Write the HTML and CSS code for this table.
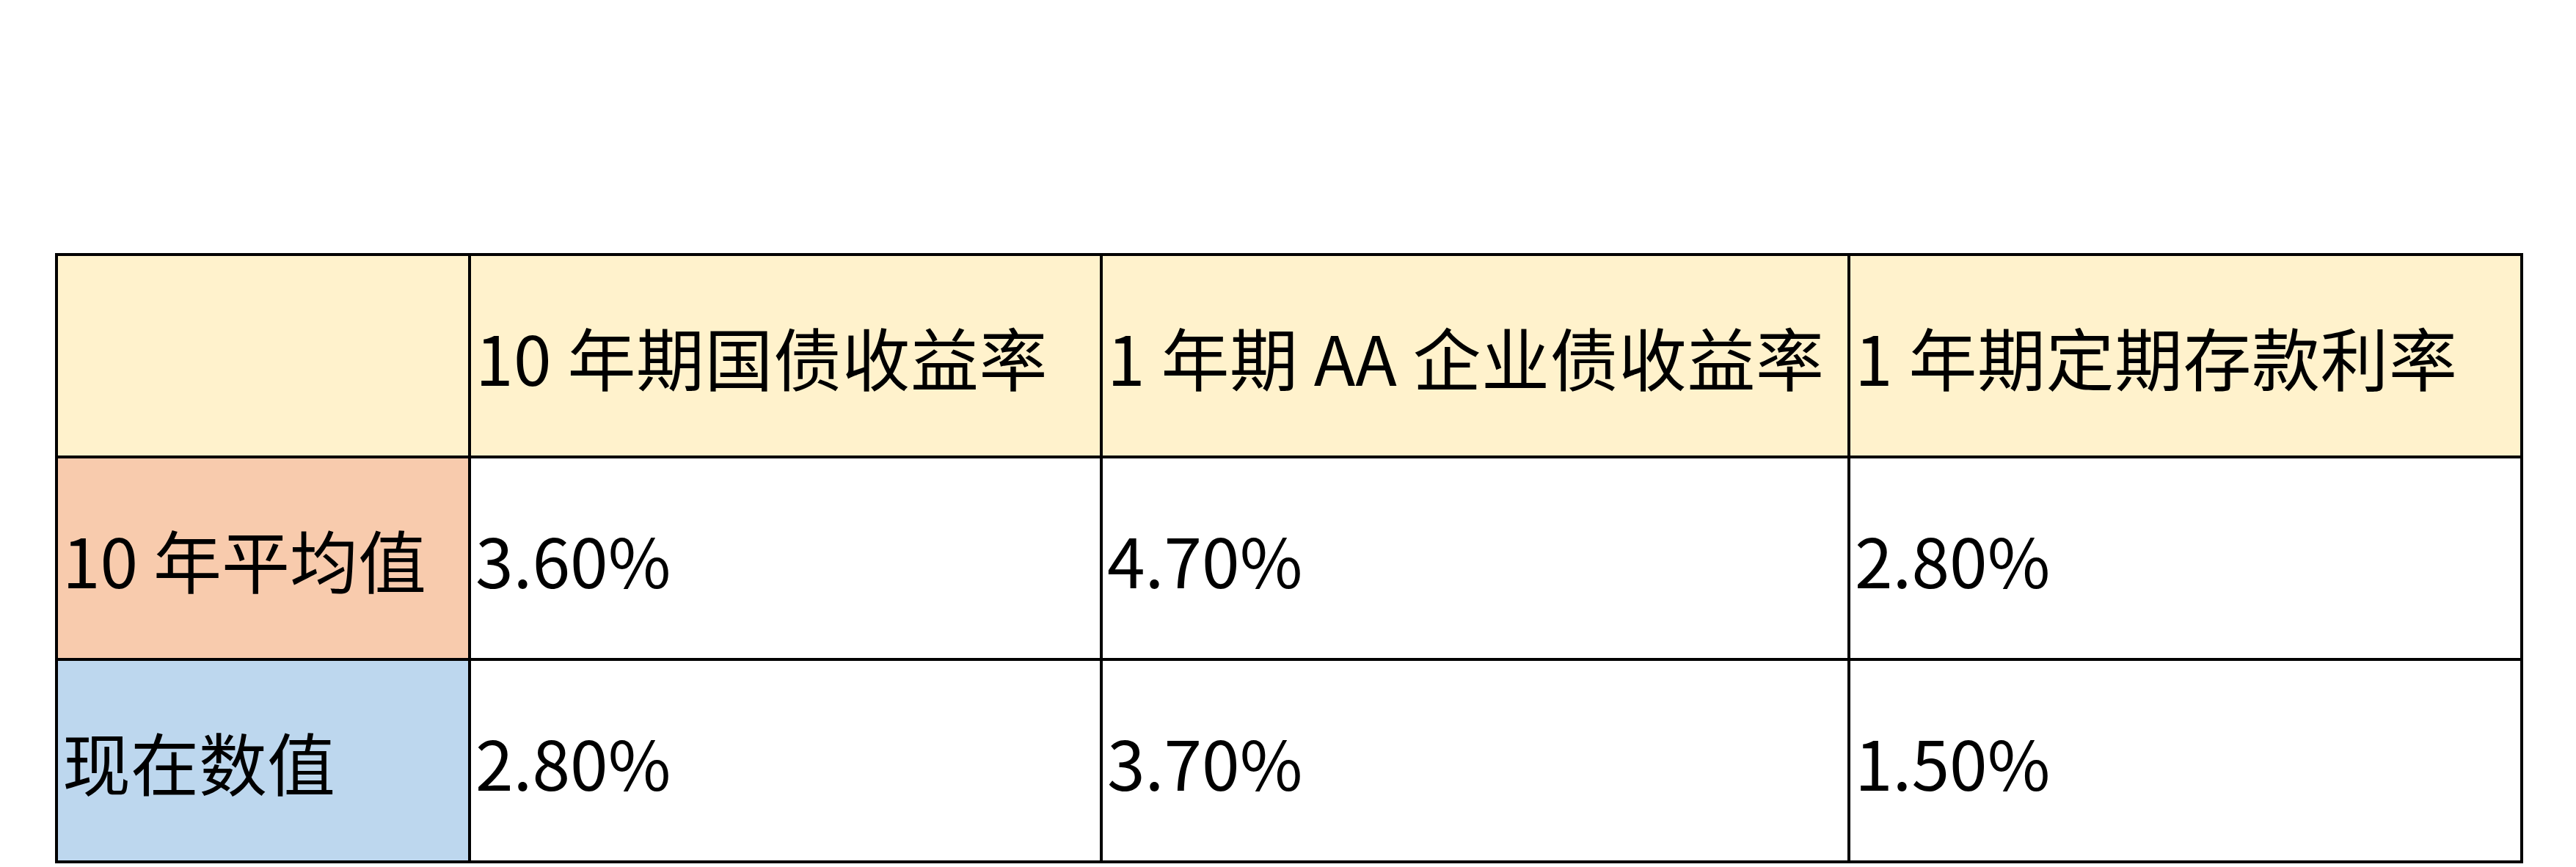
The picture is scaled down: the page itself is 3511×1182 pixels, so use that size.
FILE: index.html
```html
<!DOCTYPE html>
<html lang="zh-CN">
<head>
<meta charset="utf-8">
<title>收益率对比</title>
<link rel="stylesheet" href="styles.css">
</head>
<body>
<div class="page">
  <table class="rates">
    <colgroup>
      <col class="c-label">
      <col class="c-a">
      <col class="c-b">
      <col class="c-c">
    </colgroup>
    <tr class="head">
      <td></td>
      <td>10 年期国债收益率</td>
      <td>1 年期 AA 企业债收益率</td>
      <td>1 年期定期存款利率</td>
    </tr>
    <tr>
      <td class="lbl avg">10 年平均值</td>
      <td>3.60%</td>
      <td>4.70%</td>
      <td>2.80%</td>
    </tr>
    <tr>
      <td class="lbl now">现在数值</td>
      <td>2.80%</td>
      <td>3.70%</td>
      <td>1.50%</td>
    </tr>
  </table>
</div>
</body>
</html>
```
FILE: styles.css
```css
html, body {
  margin: 0;
  padding: 0;
  background: #ffffff;
}
.page {
  padding: 345px 0 0 75px;
}
.rates {
  border-collapse: collapse;
  table-layout: fixed;
  width: 3360px;
  font-family: "Noto Sans CJK SC", "Noto Sans", sans-serif;
  font-size: 93px;
  color: #000;
}
.c-label { width: 563px; }
.c-a { width: 861px; }
.c-b { width: 1019px; }
.c-c { width: 917px; }
.rates td {
  border: 4px solid #000;
  height: 272px;
  padding: 0 0 0 6px;
  text-align: left;
  vertical-align: middle;
  white-space: nowrap;
  line-height: 1;
}
.head td {
  background: #fff2cc;
}
.head td + td {
  letter-spacing: 0.5px;
}
.lbl.avg {
  background: #f8cbad;
}
.lbl.now {
  background: #bdd7ee;
}
```
